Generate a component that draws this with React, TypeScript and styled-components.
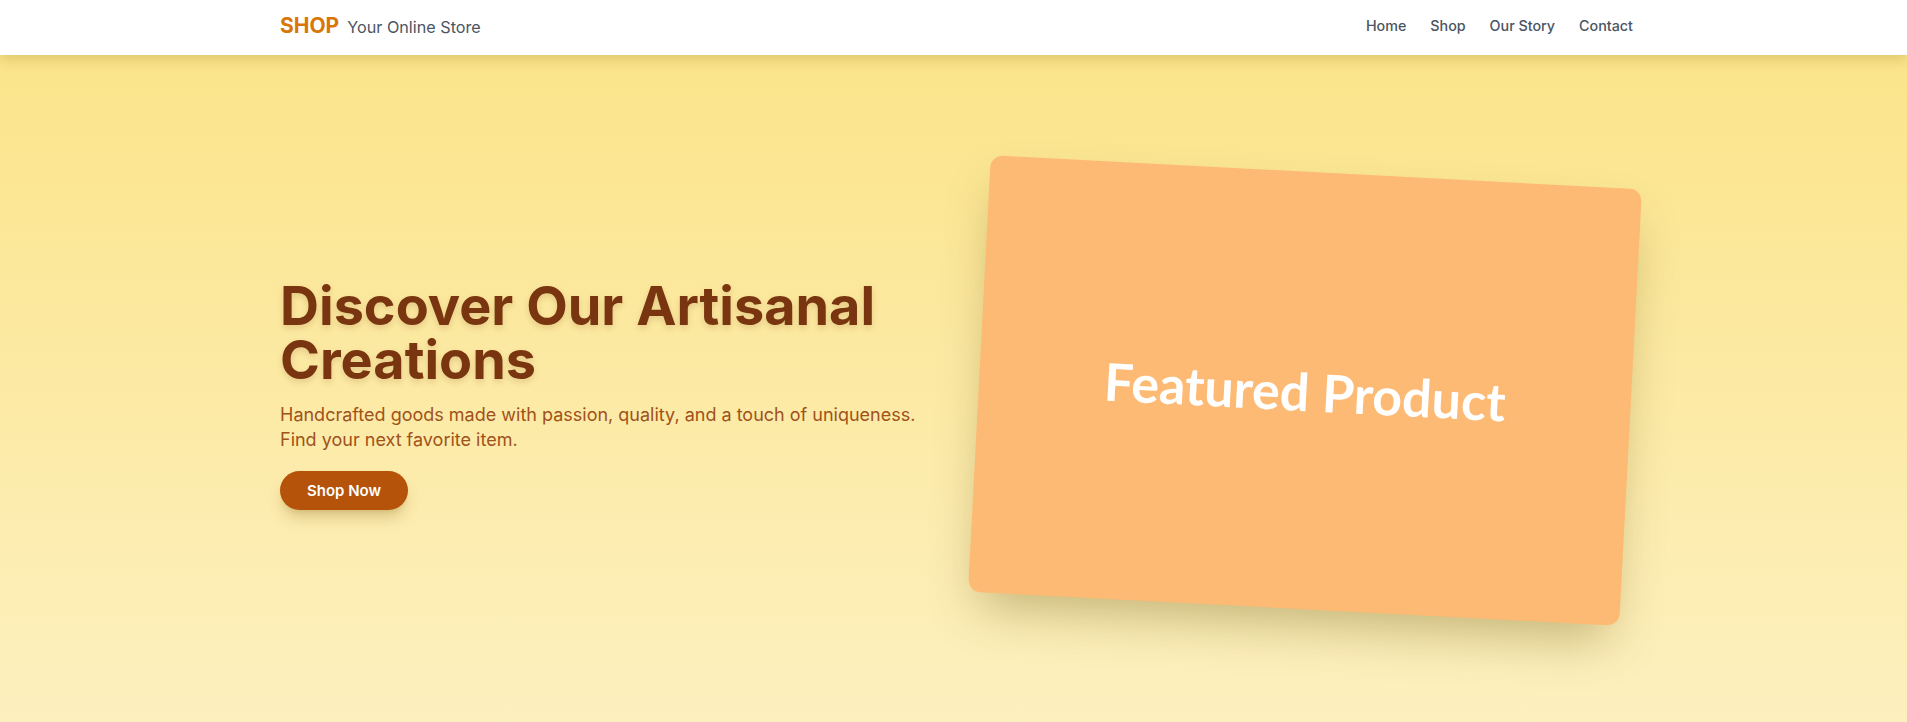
import React from "react";
import styled, { createGlobalStyle } from "styled-components";

const Global = createGlobalStyle`
  * { box-sizing: border-box; }
  html, body { margin: 0; padding: 0; }
  body {
    font-family: Inter, "Liberation Sans", sans-serif;
    background: #fef3c7;
    overflow: hidden;
  }
`;

const Page = styled.div`
  min-height: 722px;
  display: flex;
  flex-direction: column;
`;

const Header = styled.header`
  position: relative;
  z-index: 2;
  height: 55px;
  background: #ffffff;
  box-shadow: 0 4px 12px rgba(120, 90, 0, 0.22);
`;

const HeaderInner = styled.div`
  height: 100%;
  padding: 0 274px 4px 280px;
  display: flex;
  align-items: center;
  justify-content: space-between;
`;

const Brand = styled.div`
  display: flex;
  align-items: baseline;
  gap: 8px;
`;

const Logo = styled.span`
  font-size: 21px;
  font-weight: 700;
  color: #d97706;
`;

const Tagline = styled.span`
  font-size: 16.2px;
  color: #4b5563;
`;

const Nav = styled.nav`
  display: flex;
  gap: 24px;
`;

const NavLink = styled.a`
  font-size: 14.3px;
  font-weight: 500;
  color: #4b5563;
  text-decoration: none;
`;

const Hero = styled.section`
  flex: 1;
  min-height: 667px;
  background: linear-gradient(180deg, #fbe48a 0%, #fdf0bf 100%);
  padding: 4px 276px 0 280px;
  display: flex;
  align-items: center;
  gap: 48px;
`;

const TextCol = styled.div`
  flex: 1;
  display: flex;
  flex-direction: column;
  align-items: flex-start;
  padding-top: 8px;
`;

const Title = styled.h1`
  margin: 0 0 16px;
  font-size: 54px;
  line-height: 1;
  font-weight: 700;
  color: #78350f;
  text-shadow: 0 3px 6px rgba(120, 53, 15, 0.18);
`;

const Lead = styled.p`
  margin: 0 0 19px;
  font-size: 18px;
  line-height: 1.375;
  color: #a0521b;
`;

const Button = styled.a`
  display: inline-flex;
  align-items: center;
  justify-content: center;
  height: 39px;
  padding: 0 27px;
  border-radius: 999px;
  background: #b45309;
  color: #ffffff;
  font-size: 15px;
  font-weight: 600;
  text-decoration: none;
  box-shadow: 0 10px 15px -3px rgba(120, 80, 0, 0.25), 0 4px 6px -4px rgba(120, 80, 0, 0.2);
`;

const CardCol = styled.div`
  flex: 1;
  display: flex;
  justify-content: center;
`;

const Card = styled.div`
  width: 652px;
  height: 437px;
  border-radius: 12px;
  background: #fdba74;
  transform: rotate(3deg);
  box-shadow: 0 25px 50px -12px rgba(90, 70, 0, 0.35);
  display: flex;
  align-items: center;
  justify-content: center;
`;

const CardLabel = styled.span`
  font-family: Lato, "Open Sans", sans-serif;
  font-size: 52px;
  font-weight: 700;
  color: #ffffff;
`;

export default function App() {
  return (
    <Page>
      <Global />
      <Header>
        <HeaderInner>
          <Brand>
            <Logo>SHOP</Logo>
            <Tagline>Your Online Store</Tagline>
          </Brand>
          <Nav>
            <NavLink href="#">Home</NavLink>
            <NavLink href="#">Shop</NavLink>
            <NavLink href="#">Our Story</NavLink>
            <NavLink href="#">Contact</NavLink>
          </Nav>
        </HeaderInner>
      </Header>
      <Hero>
        <TextCol>
          <Title>
            Discover Our Artisanal
            <br />
            Creations
          </Title>
          <Lead>
            Handcrafted goods made with passion, quality, and a touch of uniqueness.
            <br />
            Find your next favorite item.
          </Lead>
          <Button href="#">Shop Now</Button>
        </TextCol>
        <CardCol>
          <Card>
            <CardLabel>Featured Product</CardLabel>
          </Card>
        </CardCol>
      </Hero>
    </Page>
  );
}
